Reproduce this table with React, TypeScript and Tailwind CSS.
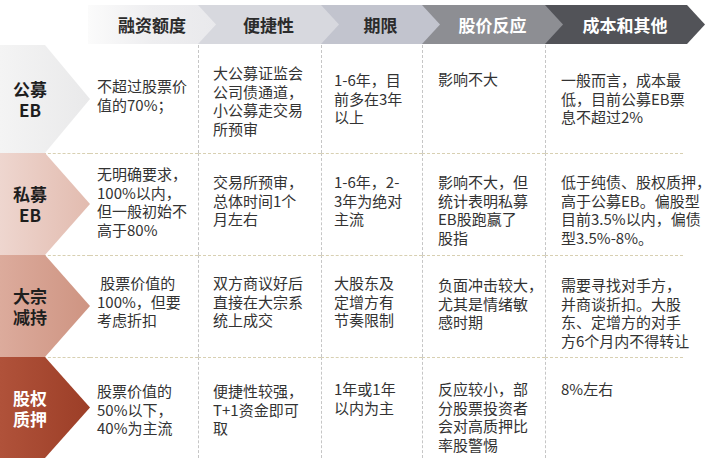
import React from 'react';

type Cell = { lines: string[]; pt: string; pl: string };

const heads = [
  { label: '融资额度', w: 'w-[128px]', bg: 'bg-linear-to-r from-[#fbfbfb] via-[#eeeef0] to-[#e9e9ec]', text: 'text-[#2b2b2b]', z: 'z-50' },
  { label: '便捷性', w: 'w-[141px]', bg: 'bg-[#d7d8de]', text: 'text-[#2b2b2b]', z: 'z-40' },
  { label: '期限', w: 'w-[119px]', bg: 'bg-[#c2c4ce]', text: 'text-[#2b2b2b]', z: 'z-30' },
  { label: '股价反应', w: 'w-[141px]', bg: 'bg-[#8d8e93]', text: 'text-white', z: 'z-20' },
  { label: '成本和其他', w: 'w-[160px]', bg: 'bg-[#525358]', text: 'text-white', z: 'z-10' },
];

const colW = ['w-[108px]', 'w-[123px]', 'w-[101px]', 'w-[123px]', 'w-[138px]'];

const rows: {
  h: string;
  label: string[];
  chevron: string;
  labelText: string;
  cells: Cell[];
}[] = [
  {
    h: 'h-[108px]',
    label: ['公募', 'EB'],
    chevron: 'bg-linear-to-r from-[#f4f4f4] to-[#e9e9ea]',
    labelText: 'text-[#1e1e1e]',
    cells: [
      { lines: ['不超过股票价', '值的70%；'], pt: 'pt-[32px]', pl: 'pl-[7px]' },
      { lines: ['大公募证监会', '公司债通道，', '小公募走交易', '所预审'], pt: 'pt-[19px]', pl: 'pl-[14px]' },
      { lines: ['1-6年，目', '前多在3年', '以上'], pt: 'pt-[26px]', pl: 'pl-[12px]' },
      { lines: ['影响不大'], pt: 'pt-[25px]', pl: 'pl-[15px]' },
      { lines: ['一般而言，成本最', '低，目前公募EB票', '息不超过2%'], pt: 'pt-[26px]', pl: 'pl-[15px]' },
    ],
  },
  {
    h: 'h-[102px]',
    label: ['私募', 'EB'],
    chevron: 'bg-linear-to-r from-[#eed6cf] to-[#e2bbaf]',
    labelText: 'text-[#1e1e1e]',
    cells: [
      { lines: ['无明确要求，', '100%以内，', '但一般初始不', '高于80%'], pt: 'pt-[11px]', pl: 'pl-[7px]' },
      { lines: ['交易所预审，', '总体时间1个', '月左右'], pt: 'pt-[19px]', pl: 'pl-[14px]' },
      { lines: ['1-6年，2-', '3年为绝对', '主流'], pt: 'pt-[19px]', pl: 'pl-[12px]' },
      { lines: ['影响不大，但', '统计表明私募', 'EB股跑赢了', '股指'], pt: 'pt-[19px]', pl: 'pl-[15px]' },
      { lines: ['低于纯债、股权质押，', '高于公募EB。偏股型', '目前3.5%以内，偏债', '型3.5%-8%。'], pt: 'pt-[19px]', pl: 'pl-[15px]' },
    ],
  },
  {
    h: 'h-[102px]',
    label: ['大宗', '减持'],
    chevron: 'bg-linear-to-r from-[#dcab9c] to-[#ce9482]',
    labelText: 'text-[#1e1e1e]',
    cells: [
      { lines: ['\u00a0股票价值的', '100%，但要', '考虑折扣'], pt: 'pt-[18px]', pl: 'pl-[7px]' },
      { lines: ['双方商议好后', '直接在大宗系', '统上成交'], pt: 'pt-[18px]', pl: 'pl-[14px]' },
      { lines: ['大股东及', '定增方有', '节奏限制'], pt: 'pt-[18px]', pl: 'pl-[12px]' },
      { lines: ['负面冲击较大，', '尤其是情绪敏', '感时期'], pt: 'pt-[20px]', pl: 'pl-[15px]' },
      { lines: ['需要寻找对手方，', '并商谈折扣。大股', '东、定增方的对手', '方6个月内不得转让'], pt: 'pt-[20px]', pl: 'pl-[15px]' },
    ],
  },
  {
    h: 'h-[101px]',
    label: ['股权', '质押'],
    chevron: 'bg-linear-to-r from-[#b0523a] to-[#9c3e27]',
    labelText: 'text-white',
    cells: [
      { lines: ['股票价值的', '50%以下，', '40%为主流'], pt: 'pt-[24px]', pl: 'pl-[7px]' },
      { lines: ['便捷性较强，', 'T+1资金即可', '取'], pt: 'pt-[24px]', pl: 'pl-[14px]' },
      { lines: ['1年或1年', '以内为主'], pt: 'pt-[22px]', pl: 'pl-[12px]' },
      { lines: ['反应较小，部', '分股票投资者', '会对高质押比', '率股警惕'], pt: 'pt-[22px]', pl: 'pl-[15px]' },
      { lines: ['8%左右'], pt: 'pt-[22px]', pl: 'pl-[15px]' },
    ],
  },
];

export default function App() {
  return (
    <div className="w-[715px] h-[458px] overflow-hidden bg-white font-['Noto_Sans_CJK_SC','Liberation_Sans',sans-serif]">
      {/* Header arrows */}
      <div className="flex pt-[5px] pl-[88px] h-[45px]">
        {heads.map((hd) => (
          <div
            key={hd.label}
            className={`${hd.w} ${hd.bg} ${hd.z} h-[39px] mr-[-18px] flex items-center justify-center [clip-path:polygon(0_0,calc(100%_-_18px)_0,100%_50%,calc(100%_-_18px)_100%,0_100%)]`}
          >
            <span className={`${hd.text} text-[17px] font-bold leading-none`}>{hd.label}</span>
          </div>
        ))}
      </div>

      {/* Table rows */}
      <div className="flex flex-col">
        {rows.map((row, ri) => (
          <div key={ri} className={`flex ${row.h}`}>
            <div className="grid w-[90px] shrink-0 isolate">
              {ri > 0 && (
                <div className="col-start-1 row-start-1 ml-[43px] border-t border-dashed border-[#d8d0b2]" />
              )}
              <div
                className={`col-start-1 row-start-1 z-0 ${row.chevron} [clip-path:polygon(0_0,50%_0,100%_50%,50%_100%,0_100%)]`}
              />
              <div
                className={`col-start-1 row-start-1 z-10 w-[60px] flex flex-col items-center justify-center text-[17px] font-bold leading-[21px] ${row.labelText}`}
              >
                {row.label.map((l) => (
                  <span key={l}>{l}</span>
                ))}
              </div>
            </div>
            {row.cells.map((c, ci) => (
              <div
                key={ci}
                className={`${colW[ci]} shrink-0 ${c.pt} ${c.pl} ${ri > 0 ? 'border-t border-dashed border-t-[#d8d0b2]' : ''} ${ci > 0 ? 'border-l border-dashed border-l-[#c6c6c6]' : ''} text-[15px] leading-[18.5px] text-[#333333] whitespace-nowrap`}
              >
                {c.lines.map((l, li) => (
                  <div key={li}>{l}</div>
                ))}
              </div>
            ))}
          </div>
        ))}
      </div>
    </div>
  );
}
